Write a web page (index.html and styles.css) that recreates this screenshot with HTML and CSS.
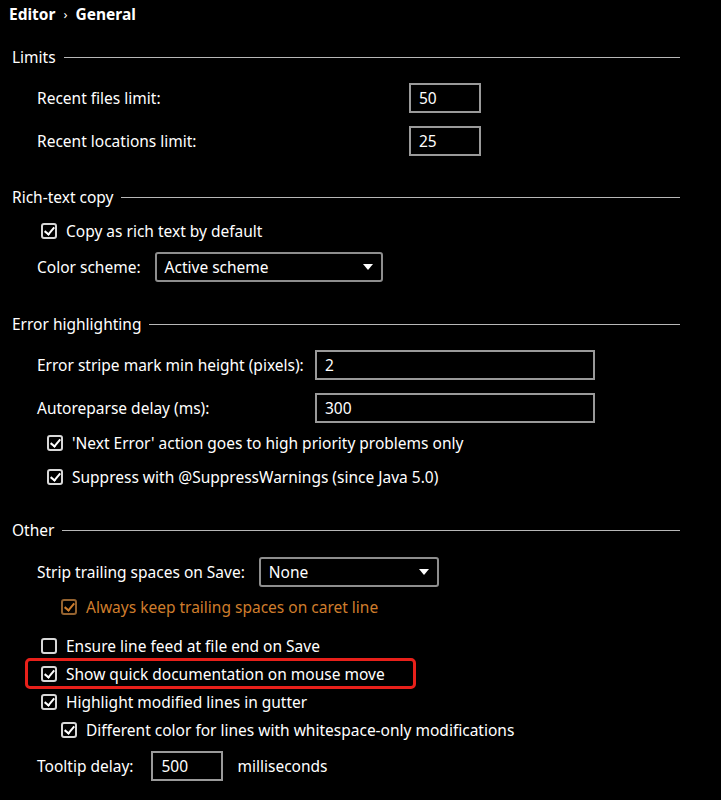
FILE: index.html
```html
<!DOCTYPE html>
<html>
<head>
<meta charset="utf-8">
<link rel="stylesheet" href="styles.css">
</head>
<body>
<div class="page">
  <div class="crumb"><span class="crumb-item">Editor</span><span class="crumb-sep">›</span><span class="crumb-item">General</span></div>

  <div class="head g-limits"><span class="head-text">Limits</span><span class="head-line"></span></div>
  <div class="field g16"><span class="label w-limits">Recent files limit:</span><span class="input w-short">50</span></div>
  <div class="field g13"><span class="label w-limits">Recent locations limit:</span><span class="input w-short">25</span></div>

  <div class="head g31"><span class="head-text">Rich-text copy</span><span class="head-line"></span></div>
  <div class="check lvl1 g14"><span class="box on"></span><span>Copy as rich text by default</span></div>
  <div class="field g11"><span class="label">Color scheme:</span><span class="select w-color">Active scheme<span class="arrow"></span></span></div>

  <div class="head g32"><span class="head-text">Error highlighting</span><span class="head-line"></span></div>
  <div class="field g16"><span class="label w-error">Error stripe mark min height (pixels):</span><span class="input w-long">2</span></div>
  <div class="field g13"><span class="label w-error">Autoreparse delay (ms):</span><span class="input w-long">300</span></div>
  <div class="check lvl1b g10"><span class="box on"></span><span>'Next Error' action goes to high priority problems only</span></div>
  <div class="check lvl1b g14"><span class="box on"></span><span>Suppress with @SuppressWarnings (since Java 5.0)</span></div>

  <div class="head g33"><span class="head-text">Other</span><span class="head-line"></span></div>
  <div class="field g17"><span class="label">Strip trailing spaces on Save:</span><span class="select w-strip">None<span class="arrow"></span></span></div>
  <div class="check lvl2 warn g10"><span class="box on"></span><span>Always keep trailing spaces on caret line</span></div>
  <div class="check lvl1 g19"><span class="box"></span><span>Ensure line feed at file end on Save</span></div>
  <div class="check lvl1 g8 marked"><span class="box on"></span><span>Show quick documentation on mouse move</span></div>
  <div class="check lvl1 g8"><span class="box on"></span><span>Highlight modified lines in gutter</span></div>
  <div class="check lvl2 g8"><span class="box on"></span><span>Different color for lines with whitespace-only modifications</span></div>
  <div class="field g11"><span class="label wide-gap">Tooltip delay:</span><span class="input w-short">500</span><span class="suffix">milliseconds</span></div>
</div>
</body>
</html>
```

FILE: styles.css
```css
html, body {
  margin: 0;
  padding: 0;
  background: #000;
}
body {
  width: 721px;
  height: 800px;
  overflow: hidden;
  color: #fff;
  font-family: "Noto Sans", "Open Sans", sans-serif;
  font-size: 15.5px;
}
.page {
  display: flex;
  flex-direction: column;
}
.crumb {
  height: 28px;
  display: flex;
  align-items: center;
  padding-left: 9px;
  font-weight: 700;
}
.crumb-sep {
  font-weight: 400;
  font-size: 13px;
  margin: 0 8px 0 8px;
}
.head {
  height: 20px;
  display: flex;
  align-items: center;
  padding-left: 12px;
  width: 668px;
}
.head-text {
  white-space: nowrap;
}
.head-line {
  flex: 1;
  height: 1px;
  background: #b8b8b8;
  margin-left: 8px;
}
.field {
  display: flex;
  align-items: center;
  padding-left: 37px;
  height: 30px;
}
.label {
  white-space: nowrap;
  margin-right: 14px;
}
.label.wide-gap { margin-right: 18px; }
.w-limits { width: 372px; margin-right: 0; }
.w-error { width: 278px; margin-right: 0; }
.input, .select {
  box-sizing: border-box;
  height: 30px;
  border: 2px solid #9a9a9a;
  display: flex;
  align-items: center;
  padding-left: 8px;
}
.w-short { width: 72px; }
.w-long { width: 280px; }
.select {
  border-radius: 3px;
  border-color: #8e8e8e;
  justify-content: space-between;
  padding-right: 8px;
}
.w-color { width: 228px; }
.w-strip { width: 180px; }
.arrow {
  width: 0;
  height: 0;
  border-left: 5.5px solid transparent;
  border-right: 5.5px solid transparent;
  border-top: 6px solid #fff;
}
.suffix {
  margin-left: 14px;
}
.check {
  height: 20px;
  display: flex;
  align-items: center;
  position: relative;
}
.lvl1 { padding-left: 41px; }
.lvl1b { padding-left: 47px; }
.lvl2 { padding-left: 61px; }
.box {
  box-sizing: border-box;
  width: 16px;
  height: 16px;
  border: 2px solid #d8d8d8;
  border-radius: 3px;
  margin-right: 9px;
  position: relative;
  flex: none;
}
.box.on::after {
  content: "";
  position: absolute;
  left: 2px;
  top: 0px;
  width: 4px;
  height: 8px;
  border-right: 2.5px solid #fff;
  border-bottom: 2.5px solid #fff;
  transform: translate(1.5px, 0) rotate(40deg);
}
.warn { color: #cf7d2c; }
.warn .box { border-color: #94622f; }
.warn .box.on::after { border-color: #cf7d2c; }
.marked::before {
  content: "";
  position: absolute;
  left: 25px;
  top: -6px;
  width: 385px;
  height: 25px;
  border: 3px solid #e8201a;
  border-radius: 5px;
}
.g8 { margin-top: 8px; }
.g10 { margin-top: 10px; }
.g11 { margin-top: 11px; }
.g13 { margin-top: 13px; }
.g14 { margin-top: 14px; }
.g16 { margin-top: 16px; }
.g17 { margin-top: 17px; }
.g19 { margin-top: 19px; }
.g31 { margin-top: 31px; }
.g32 { margin-top: 32px; }
.g33 { margin-top: 33px; }
.g-limits { margin-top: 19px; }
```
